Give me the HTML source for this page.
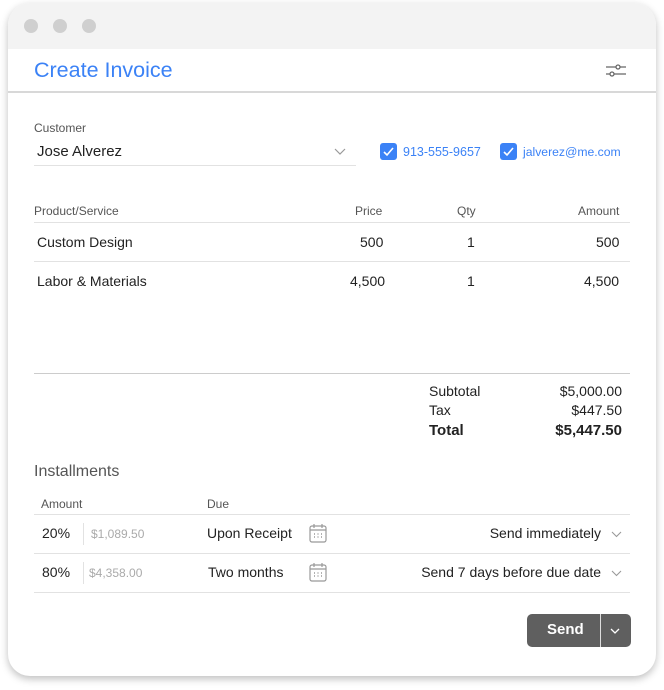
<!DOCTYPE html>
<html><head><style>
*{margin:0;padding:0;box-sizing:border-box}
body{width:664px;height:690px;background:#fff;font-family:"Liberation Sans",sans-serif;position:relative;overflow:hidden;color:#222}
.win{position:absolute;left:8px;top:3px;width:648px;height:673px;border-radius:22px;background:#fff;box-shadow:0 3px 8px rgba(0,0,0,.25);overflow:hidden}
.tb{position:absolute;left:0;top:0;width:100%;height:46px;background:#f3f3f3}
.dot{position:absolute;top:16px;width:14px;height:14px;border-radius:50%;background:#cfcfcf}
.a{position:absolute;white-space:nowrap}
.line{position:absolute;height:1px;background:#e2e2e2}
.cb{position:absolute;width:17px;height:17px;border-radius:3px;background:#3b82f6}
.g{color:#555}
</style></head><body>
<div class="win">
<div class="tb"></div>
<div class="dot" style="left:16px"></div><div class="dot" style="left:45px"></div><div class="dot" style="left:74px"></div>
<div class="a" style="left:26px;top:55px;font-size:21.5px;color:#3b82f6">Create Invoice</div>
<svg class="a" style="left:597px;top:58px" width="22" height="20" viewBox="0 0 22 20" fill="none" stroke="#666" stroke-width="1.3"><path d="M1 6h10M15 6h6M1 13h4M9 13h12"/><circle cx="13" cy="6" r="2"/><circle cx="7" cy="13" r="2"/></svg>
<div class="line" style="left:0;top:88px;width:648px;background:#d8d8d8;height:2px"></div>
<div class="a g" style="left:26px;top:118px;font-size:12px">Customer</div>
<div class="a" style="left:29px;top:140px;font-size:15px">Jose Alverez</div>
<svg class="a" style="left:326px;top:145px" width="12" height="8"><path d="M1 1l5 5 5-5" stroke="#999" fill="none" stroke-width="1.2"/></svg>
<div class="line" style="left:26px;top:162px;width:322px"></div>
<div class="cb" style="left:372px;top:140px"></div>
<svg class="a" style="left:372px;top:140px" width="17" height="17"><path d="M4 9l3 3 6-7" stroke="#fff" fill="none" stroke-width="1.6"/></svg>
<div class="a" style="left:395px;top:142px;font-size:12.5px;color:#3b82f6">913-555-9657</div>
<div class="cb" style="left:492px;top:140px"></div>
<svg class="a" style="left:492px;top:140px" width="17" height="17"><path d="M4 9l3 3 6-7" stroke="#fff" fill="none" stroke-width="1.6"/></svg>
<div class="a" style="left:515px;top:142px;font-size:12.2px;color:#3b82f6">jalverez@me.com</div>
<div class="a g" style="left:26px;top:201px;font-size:12px">Product/Service</div>
<div class="a g" style="left:347px;top:201px;font-size:12px">Price</div>
<div class="a g" style="left:449px;top:201px;font-size:12px">Qty</div>
<div class="a g" style="left:570px;top:201px;font-size:12px">Amount</div>
<div class="line" style="left:26px;top:219px;width:596px"></div>
<div class="a" style="left:29px;top:231px;font-size:14px">Custom Design</div>
<div class="a" style="left:352px;top:231px;font-size:14px">500</div>
<div class="a" style="left:459px;top:231px;font-size:14px">1</div>
<div class="a" style="left:588px;top:231px;font-size:14px">500</div>
<div class="line" style="left:26px;top:258px;width:596px"></div>
<div class="a" style="left:29px;top:270px;font-size:14px">Labor &amp; Materials</div>
<div class="a" style="left:342px;top:270px;font-size:14px">4,500</div>
<div class="a" style="left:459px;top:270px;font-size:14px">1</div>
<div class="a" style="left:576px;top:270px;font-size:14px">4,500</div>
<div class="line" style="left:26px;top:370px;width:596px;background:#ccc"></div>
<div class="a" style="left:421px;top:380px;font-size:14px">Subtotal</div>
<div class="a" style="right:34px;top:380px;font-size:14px">$5,000.00</div>
<div class="a" style="left:421px;top:399px;font-size:14px">Tax</div>
<div class="a" style="right:34px;top:399px;font-size:14px">$447.50</div>
<div class="a" style="left:421px;top:419px;font-size:15px;font-weight:bold">Total</div>
<div class="a" style="right:34px;top:419px;font-size:15px;font-weight:bold">$5,447.50</div>
<div class="a g" style="left:26px;top:460px;font-size:16px">Installments</div>
<div class="a g" style="left:33px;top:494px;font-size:12px">Amount</div>
<div class="a g" style="left:199px;top:494px;font-size:12px">Due</div>
<div class="line" style="left:26px;top:511px;width:596px"></div>
<div class="a" style="left:34px;top:522px;font-size:14px">20%</div>
<div class="line" style="left:75px;top:520px;width:1px;height:22px"></div>
<div class="a" style="left:83px;top:524px;font-size:12px;color:#aaa">$1,089.50</div>
<div class="a" style="left:199px;top:522px;font-size:14px">Upon Receipt</div>
<svg class="a" style="left:300px;top:519px" width="20" height="22" viewBox="0 0 20 22" fill="none" stroke="#999" stroke-width="1.2"><rect x="2" y="4" width="16" height="16" rx="2"/><path d="M2 8h16M6 2v4M14 2v4"/><path d="M6 12h1M9.5 12h1M13 12h1M6 15h1M9.5 15h1M13 15h1" stroke-width="1.4"/></svg>
<div class="a" style="right:55px;top:522px;font-size:14px">Send immediately</div>
<svg class="a" style="left:603px;top:528px" width="11" height="7"><path d="M1 1l4.5 4.5L10 1" stroke="#999" fill="none" stroke-width="1.1"/></svg>
<div class="line" style="left:26px;top:550px;width:596px"></div>
<div class="a" style="left:34px;top:561px;font-size:14px">80%</div>
<div class="line" style="left:75px;top:559px;width:1px;height:22px"></div>
<div class="a" style="left:81px;top:563px;font-size:12px;color:#aaa">$4,358.00</div>
<div class="a" style="left:200px;top:561px;font-size:14px">Two months</div>
<svg class="a" style="left:300px;top:558px" width="20" height="22" viewBox="0 0 20 22" fill="none" stroke="#999" stroke-width="1.2"><rect x="2" y="4" width="16" height="16" rx="2"/><path d="M2 8h16M6 2v4M14 2v4"/><path d="M6 12h1M9.5 12h1M13 12h1M6 15h1M9.5 15h1M13 15h1" stroke-width="1.4"/></svg>
<div class="a" style="right:55px;top:561px;font-size:14px">Send 7 days before due date</div>
<svg class="a" style="left:603px;top:567px" width="11" height="7"><path d="M1 1l4.5 4.5L10 1" stroke="#999" fill="none" stroke-width="1.1"/></svg>
<div class="line" style="left:26px;top:589px;width:596px"></div>
<div class="a" style="left:519px;top:611px;width:104px;height:33px;border-radius:5px;background:#5f5f5f"></div>
<div class="a" style="left:592px;top:611px;width:1px;height:33px;background:#ddd"></div>
<div class="a" style="left:539px;top:618px;font-size:15px;font-weight:bold;color:#fff">Send</div>
<svg class="a" style="left:602px;top:625px" width="10" height="6"><path d="M1 1l4 4 4-4" stroke="#fff" fill="none" stroke-width="1.3"/></svg>
</div>
</body></html>
